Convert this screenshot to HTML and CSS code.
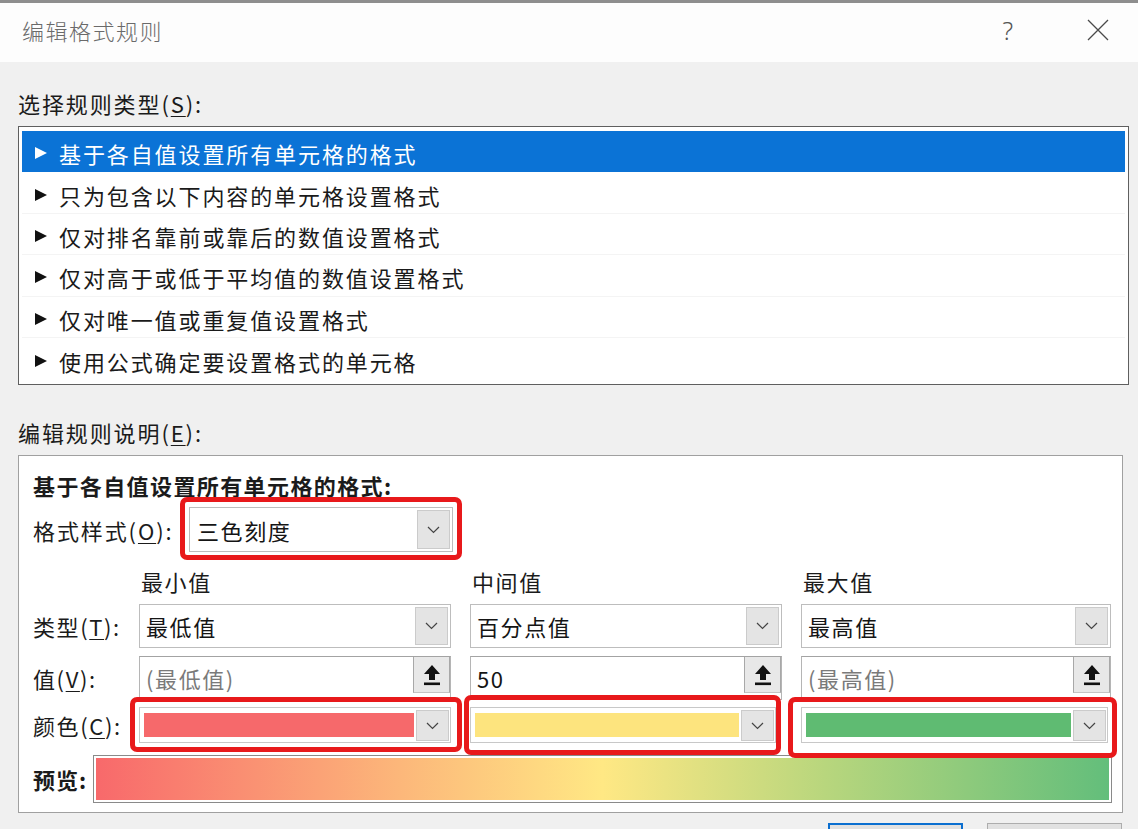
FILE: index.html
```html
<!DOCTYPE html>
<html lang="zh-CN">
<head>
<meta charset="utf-8">
<title>编辑格式规则</title>
<link rel="stylesheet" href="styles.css">
</head>
<body>
<div class="topstrip"></div>
<div class="titlebar">
  <span class="title">编辑格式规则</span>
  <span class="help">?</span>
  <span class="close"><svg width="22" height="22" viewBox="0 0 22 22"><path d="M1 1 L21 21 M21 1 L1 21" stroke="#4a4a4a" stroke-width="1.3" fill="none"/></svg></span>
</div>
<div class="main">
  <div class="label">选择规则类型(<u>S</u>):</div>
  <div class="listbox">
    <div class="row sel"><span class="tri"></span><span>基于各自值设置所有单元格的格式</span></div>
    <div class="row"><span class="tri"></span><span>只为包含以下内容的单元格设置格式</span></div>
    <div class="row"><span class="tri"></span><span>仅对排名靠前或靠后的数值设置格式</span></div>
    <div class="row"><span class="tri"></span><span>仅对高于或低于平均值的数值设置格式</span></div>
    <div class="row"><span class="tri"></span><span>仅对唯一值或重复值设置格式</span></div>
    <div class="row last"><span class="tri"></span><span>使用公式确定要设置格式的单元格</span></div>
  </div>
  <div class="label label2">编辑规则说明(<u>E</u>):</div>
  <div class="descbox">
    <div class="desc-title">基于各自值设置所有单元格的格式:</div>
    <div class="style-row">
      <span class="style-label">格式样式(<u>O</u>):</span>
      <div class="cell">
        <div class="combo style-combo">
          <span class="txt">三色刻度</span>
          <span class="arrow"><svg width="13" height="8" viewBox="0 0 13 8"><path d="M1 1 L6.5 6.5 L12 1" stroke="#444" stroke-width="1.2" fill="none"/></svg></span>
        </div>
        <span class="ring ring-style"></span>
      </div>
    </div>

    <div class="grow head">
      <span class="rlabel"></span>
      <span class="colhead">最小值</span>
      <span class="colhead">中间值</span>
      <span class="colhead">最大值</span>
    </div>

    <div class="grow type">
      <span class="rlabel">类型(<u>T</u>):</span>
      <div class="combo wide">
        <span class="txt">最低值</span>
        <span class="arrow"><svg width="13" height="8" viewBox="0 0 13 8"><path d="M1 1 L6.5 6.5 L12 1" stroke="#444" stroke-width="1.2" fill="none"/></svg></span>
      </div>
      <div class="combo wide">
        <span class="txt">百分点值</span>
        <span class="arrow"><svg width="13" height="8" viewBox="0 0 13 8"><path d="M1 1 L6.5 6.5 L12 1" stroke="#444" stroke-width="1.2" fill="none"/></svg></span>
      </div>
      <div class="combo wide last">
        <span class="txt">最高值</span>
        <span class="arrow"><svg width="13" height="8" viewBox="0 0 13 8"><path d="M1 1 L6.5 6.5 L12 1" stroke="#444" stroke-width="1.2" fill="none"/></svg></span>
      </div>
    </div>

    <div class="grow value">
      <span class="rlabel">值(<u>V</u>):</span>
      <div class="input wide">
        <span class="txt muted">(最低值)</span>
        <span class="upbtn"><svg width="18" height="22" viewBox="0 0 18 22"><path d="M9 1 L17 10 H12 V16 H6 V10 H1 Z" fill="#111"/><rect x="1" y="18.5" width="16" height="2.6" fill="#111"/></svg></span>
      </div>
      <div class="input wide">
        <span class="txt">50</span>
        <span class="upbtn"><svg width="18" height="22" viewBox="0 0 18 22"><path d="M9 1 L17 10 H12 V16 H6 V10 H1 Z" fill="#111"/><rect x="1" y="18.5" width="16" height="2.6" fill="#111"/></svg></span>
      </div>
      <div class="input wide last">
        <span class="txt muted">(最高值)</span>
        <span class="upbtn"><svg width="18" height="22" viewBox="0 0 18 22"><path d="M9 1 L17 10 H12 V16 H6 V10 H1 Z" fill="#111"/><rect x="1" y="18.5" width="16" height="2.6" fill="#111"/></svg></span>
      </div>
    </div>

    <div class="grow color">
      <span class="rlabel">颜色(<u>C</u>):</span>
      <div class="cell wide">
        <div class="ccombo">
          <span class="swatch sw-red"></span>
          <span class="arrow"><svg width="13" height="8" viewBox="0 0 13 8"><path d="M1 1 L6.5 6.5 L12 1" stroke="#444" stroke-width="1.2" fill="none"/></svg></span>
        </div>
        <span class="ring ring-a"></span>
      </div>
      <div class="cell wide">
        <div class="ccombo narrow">
          <span class="swatch sw-yellow"></span>
          <span class="arrow"><svg width="13" height="8" viewBox="0 0 13 8"><path d="M1 1 L6.5 6.5 L12 1" stroke="#444" stroke-width="1.2" fill="none"/></svg></span>
        </div>
        <span class="ring ring-b"></span>
      </div>
      <div class="cell wide last">
        <div class="ccombo narrow3">
          <span class="swatch sw-green"></span>
          <span class="arrow"><svg width="13" height="8" viewBox="0 0 13 8"><path d="M1 1 L6.5 6.5 L12 1" stroke="#444" stroke-width="1.2" fill="none"/></svg></span>
        </div>
        <span class="ring ring-c"></span>
      </div>
    </div>

    <div class="preview-row">
      <span class="plabel">预览:</span>
      <div class="preview"><div class="grad"></div></div>
    </div>
  </div>
  <div class="buttons">
    <div class="btn primary"></div>
    <div class="btn"></div>
  </div>
</div>
</body>
</html>
```

FILE: styles.css
```css
* { box-sizing: border-box; }

body {
  margin: 0;
  width: 1138px;
  height: 829px;
  overflow: hidden;
  background: #f0f0f0;
  font-family: "Noto Sans CJK SC", "Noto Sans", sans-serif;
  color: #1b1b1b;
}

u { text-underline-offset: 3px; text-decoration-thickness: 1px; }

.topstrip { height: 3px; background: #8e8e8e; }

.titlebar {
  height: 59px;
  background: #fdfdfd;
  display: flex;
  align-items: center;
  padding-left: 22px;
  padding-bottom: 6px;
}
.title {
  font-size: 22px;
  letter-spacing: 1.5px;
  color: #6a6a6a;
  font-weight: 300;
}
.help {
  margin-left: auto;
  margin-right: 74px;
  font-family: "Noto Sans", sans-serif;
  font-weight: 300;
  font-size: 25px;
  color: #555;
}
.close { display: flex; margin-right: 29px; }

.main { padding: 26px 0 0 18px; }

.label {
  height: 30px;
  line-height: 30px;
  font-size: 22px;
  letter-spacing: 1.9px;
}
.label2 { margin-top: 32px; }

.listbox {
  margin-top: 8px;
  width: 1111px;
  height: 259px;
  border: 1px solid #5f5f5f;
  background: #fff;
  padding: 4px 3px;
}
.row {
  height: 41.4px;
  display: flex;
  align-items: center;
  padding: 4px 0 0 13px;
  font-size: 22px;
  letter-spacing: 1.9px;
  color: #1a1a1a;
  border-bottom: 1px solid #f4f4f4;
}
.row.last { border-bottom: none; }
.row.sel {
  background: #0b73d6;
  color: #fff;
  border-bottom-color: #0b73d6;
}
.tri {
  width: 0;
  height: 0;
  border-top: 6.5px solid transparent;
  border-bottom: 6.5px solid transparent;
  border-left: 12px solid #111;
  margin-right: 12px;
}
.row.sel .tri { border-left-color: #fff; }

.descbox {
  margin-top: 8px;
  width: 1105px;
  border: 1px solid #a0a0a0;
  background: #fff;
  padding: 14px 0 9px 14px;
}
.desc-title {
  height: 30px;
  line-height: 30px;
  font-size: 22px;
  font-weight: 700;
  letter-spacing: 1.4px;
}

.style-row {
  display: flex;
  align-items: center;
  height: 45px;
  margin-top: 7px;
  font-size: 22px;
  letter-spacing: 1.9px;
}
.style-label { width: 156px; }

.cell { position: relative; display: flex; }

.combo, .input, .ccombo {
  display: flex;
  background: #fff;
  border: 1px solid #bdbdbd;
}
.style-combo { width: 264px; height: 45px; }
.txt {
  flex: 1;
  display: flex;
  align-items: center;
  padding-left: 6px;
  font-size: 22px;
  letter-spacing: 1.6px;
  color: #151515;
}
.style-combo .txt { padding-left: 7px; }
.txt.muted { color: #7a7a7a; }

.arrow {
  width: 33px;
  margin: 2px 2px 2px 0;
  background: #e4e4e4;
  border: 1px solid #cbcbcb;
  display: flex;
  align-items: center;
  justify-content: center;
}

.grow { display: flex; gap: 19px; }
.rlabel {
  width: 106px;
  margin-right: -19px;
  display: flex;
  align-items: center;
  font-size: 22px;
  letter-spacing: 1.6px;
}
.wide { width: 312px; }

.head { margin-top: 14px; height: 30px; }
.colhead {
  width: 312px;
  padding-left: 2px;
  line-height: 30px;
  font-size: 22px;
  letter-spacing: 1.6px;
}

.type { margin-top: 8px; height: 44px; }
.type .combo.last { width: 310px; }

.value { margin-top: 8px; height: 44px; }
.input { border-color: #b5b5b5; border-top-color: #a3a3a3; }
.input.last { width: 310px; }
.upbtn {
  width: 37px;
  background: #e8e8e8;
  border-left: 1px solid #a8a8a8;
  border-right: 1px solid #a8a8a8;
  border-bottom: 1px solid #c4c4c4;
  display: flex;
  align-items: center;
  justify-content: center;
  margin-bottom: 6px;
}

.color { margin-top: 7px; height: 36px; }
.ccombo { width: 312px; height: 36px; border-color: #c8c8c8; }
.ccombo.narrow { width: 306px; }
.ccombo.narrow3 { width: 307px; }
.swatch { flex: 1; margin: 5px 2px 5px 4px; }
.sw-red { background: #f6696b; }
.sw-yellow { background: #fde47e; }
.sw-green { background: #5fbb72; }
.ccombo .arrow { margin: 2px 1px 1px 0; }

.ring {
  position: absolute;
  border: 5px solid #e8191b;
  border-radius: 7px;
  pointer-events: none;
}
.ring-style { top: -10px; bottom: -8px; left: -9px; right: -9px; }
.ring-a { top: -10px; bottom: -9px; left: -9px; right: -11px; }
.ring-b { top: -12px; bottom: -12px; left: -6px; right: 1px; }
.ring-c { top: -10px; bottom: -15px; left: -13px; right: -4px; }

.preview-row {
  display: flex;
  align-items: center;
  margin-top: 12px;
  height: 48px;
}
.plabel {
  width: 60px;
  font-size: 22px;
  font-weight: 700;
  letter-spacing: 1px;
}
.preview {
  width: 1019px;
  height: 48px;
  border: 1px solid #8a8a8a;
  padding: 2px;
  background: #fff;
}
.grad {
  height: 100%;
  background: linear-gradient(to right, #f8696b 0%, #fcb77a 30%, #ffe884 50%, #b8d67d 72%, #63be7b 100%);
}

.buttons {
  display: flex;
  justify-content: flex-end;
  gap: 24px;
  margin-top: 10px;
  padding-right: 16px;
}
.btn {
  width: 135px;
  height: 32px;
  background: #e1e1e1;
  border: 1px solid #adadad;
}
.btn.primary { border: 2px solid #0b6fd0; }
```
